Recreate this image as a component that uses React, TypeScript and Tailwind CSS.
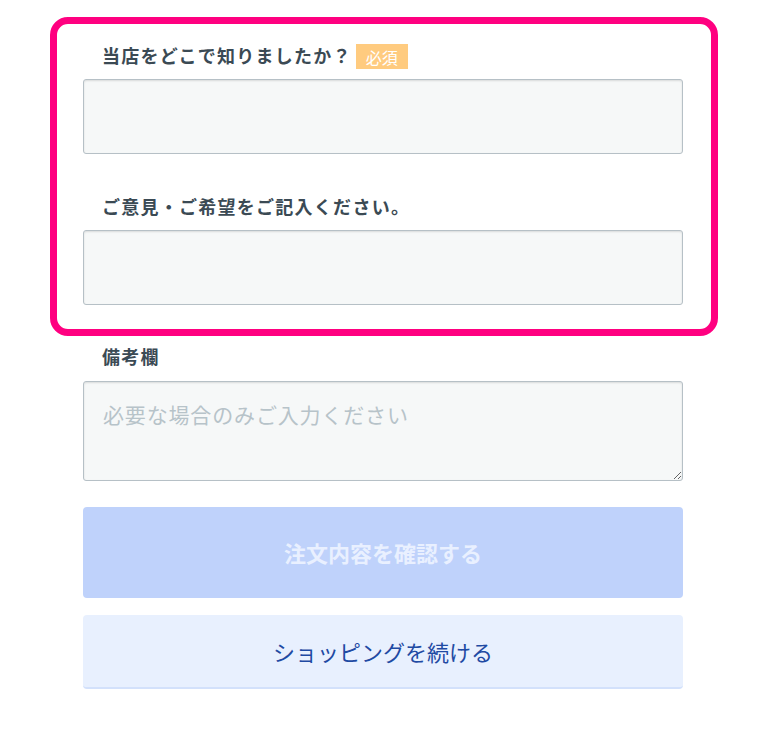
const font = { fontFamily: '"Noto Sans CJK JP", "Noto Sans", sans-serif' };

const Field = ({ label, required, className = '' }: { label: string; required?: boolean; className?: string }) => (
  <div className={className}>
    <div className="flex items-center h-[25px] pl-[19px] mb-[10px]">
      <span className="text-[18px] font-bold text-[#3b4a54] tracking-[0.07em] leading-none pb-[3px]">{label}</span>
      {required && (
        <span className="ml-[4px] h-[25px] px-[10px] flex items-center bg-[#ffcb7f] text-white text-[16px] leading-none">
          必須
        </span>
      )}
    </div>
    <input
      type="text"
      className="block w-full h-[75px] rounded-[3px] border border-[#b6c0c6] bg-[#f6f8f8] shadow-[inset_0_1px_2px_rgba(0,0,0,0.12)] outline-none"
    />
  </div>
);

export default function App() {
  return (
    <div className="min-h-[740px] bg-white pt-[17px]" style={font}>
      <div className="ml-[50px] w-[668px] rounded-[18px] border-[7px] border-[#ff0080] pt-[20px] pb-[24px] pl-[26px] pr-[28px]">
        <Field label="当店をどこで知りましたか？" required />
        <Field label="ご意見・ご希望をご記入ください。" className="mt-[41px]" />
      </div>

      <div className="ml-[83px] w-[600px]">
        <div className="flex items-center h-[25px] pl-[19px] mt-[9px] mb-[11px]">
          <span className="text-[18px] font-bold text-[#3b4a54] tracking-[0.07em] leading-none pb-[3px]">備考欄</span>
        </div>
        <textarea
          placeholder="必要な場合のみご入力ください"
          className="block w-full h-[100px] rounded-[3px] border border-[#b6c0c6] bg-[#f6f8f8] shadow-[inset_0_1px_2px_rgba(0,0,0,0.12)] outline-none px-[19px] pt-[17px] text-[21px] leading-[1.5] tracking-[0.04em] text-[#3b4a54] placeholder:text-[#b7c3c9]"
        />

        <button className="mt-[26px] w-full h-[91px] rounded-[4px] bg-[#bfd2fb] text-[#e9f0ff] text-[22px] font-bold flex items-center justify-center">
          注文内容を確認する
        </button>
        <button className="mt-[17px] w-full h-[74px] rounded-[4px] bg-[#e8f0fe] border-b-2 border-[#d3e1fb] text-[#1f4aa3] text-[22px] flex items-center justify-center">
          ショッピングを続ける
        </button>
      </div>
    </div>
  );
}
